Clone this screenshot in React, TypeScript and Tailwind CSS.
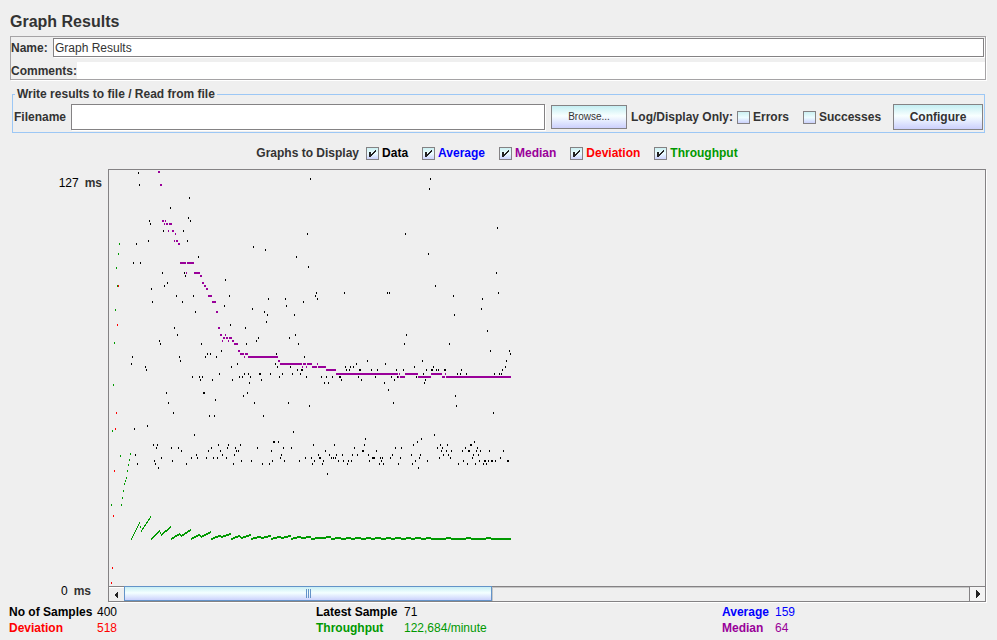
import React from "react";

type Row = [number, ...number[]];
type Tile = { x: number; y: number; rows: Row[] };
type Span = [y: number, from: number, to: number];

// Each row is a y value followed by the x of every sample on it.
const dataTiles: Tile[] = [
  {
    x: -4,
    y: -5,
    rows: [
      [7, 33], [19, 34], [32, 84], [42, 65], [52, 83], [55, 44, 85], [58, 45], [65, 58, 78], [75, 43, 82],
      [78, 31], [91, 93], [97, 28, 35], [107, 57, 79], [110, 80], [114, 120], [117, 62], [120, 59], [123, 46],
      [130, 71, 88, 124], [136, 47, 77], [140, 119], [146, 90],
    ],
  },
  {
    x: -4,
    y: 150,
    rows: [
      [4, 125], [7, 69], [14, 72], [20, 54], [23, 55, 96], [30, 116], [33, 102, 105], [36, 27, 74, 100, 111],
      [40, 75], [43, 26], [46, 40, 126], [49, 41], [53, 114], [56, 87, 94, 97], [59, 95, 107, 127],
      [72, 61, 98, 99], [79, 110], [82, 63], [92, 68], [95, 104, 109], [105, 42], [108, 29], [114, 89],
      [124, 48, 52, 113, 123], [127, 51, 66, 73, 106, 122], [130, 76, 103, 115], [134, 30, 91, 117, 129],
      [137, 56, 86, 92, 101, 108, 112, 121], [140, 49, 67], [143, 32, 50, 81, 128], [147, 53],
    ],
  },
  {
    x: 126,
    y: -5,
    rows: [
      [13, 75], [68, 72], [81, 18], [84, 30], [91, 61], [101, 73], [127, 81, 109], [130, 80], [133, 33, 50, 82],
      [136, 68], [140, 51], [143, 17], [146, 29], [149, 32, 59], [156, 31],
    ],
  },
  {
    x: 126,
    y: 150,
    rows: [
      [7, 10], [14, 60], [17, 23, 54], [20, 21], [23, 11, 63], [33, 41], [36, 69], [40, 132], [43, 2, 40, 121],
      [46, 42, 55, 110, 115, 118], [49, 62, 66, 67, 111, 114, 124, 125, 136, 142],
      [53, 9, 13, 24, 25, 35, 47, 57, 65], [56, 4, 7, 15, 44, 71, 86, 91, 97, 104, 105, 123, 140],
      [59, 26, 106, 126], [62, 14, 89, 93, 149], [72, 12], [75, 8], [82, 19, 53], [85, 74], [95, 28],
      [111, 58], [118, 130], [121, 38, 39, 43], [124, 5, 78, 99, 129], [127, 0, 22, 48, 56, 119],
      [130, 1, 3, 36, 90, 127, 128, 141], [134, 46, 83, 94, 101, 107, 117, 122, 133],
      [137, 45, 70, 76, 84, 85, 96, 98, 100, 137, 138, 139, 145, 147],
      [140, 6, 16, 37, 49, 64, 79, 88, 103, 108, 113, 116, 134, 146], [143, 27, 34, 77, 87, 112, 144, 148],
      [153, 92],
    ],
  },
  {
    x: 266,
    y: -5,
    rows: [
      [13, 55], [23, 54], [62, 122], [68, 30], [88, 53], [107, 121], [120, 60], [127, 12, 14, 123], [130, 78],
      [133, 107], [143, 106], [149, 79],
    ],
  },
  {
    x: 266,
    y: 150,
    rows: [
      [10, 112], [14, 31], [23, 29, 74], [30, 115, 134], [33, 135], [40, 47, 131], [43, 10], [46, 39, 58, 130],
      [49, 21, 28, 51, 56, 57, 61, 63, 69, 70, 86, 127], [53, 48, 82, 85, 91, 119, 124, 126], [56, 16, 22, 41],
      [59, 19, 50], [62, 49], [69, 13], [75, 80], [82, 18], [85, 81], [92, 118], [114, 59], [118, 46],
      [121, 42, 99], [124, 38, 65, 72, 95, 96], [127, 20, 26, 62, 67, 90, 102],
      [130, 66, 71, 76, 87, 93, 94, 101, 105, 114, 128], [134, 17, 36, 45, 68, 73, 98, 103],
      [137, 15, 25, 44, 64, 75, 97, 125], [140, 40, 52, 88, 104, 109, 110, 113, 116, 117, 120, 132, 133],
      [143, 23, 37, 83, 92, 100, 108, 111], [147, 43],
    ],
  },
];

const throughputTiles: Tile[] = [
  { x: -4, y: -5, rows: [[78, 14], [88, 13], [102, 11], [120, 12], [144, 10]] },
  { x: -4, y: 150, rows: [[22, 9], [64, 8], [110, 7], [133, 25], [135, 15], [139, 24], [144, 23]] },
  { x: -4, y: 270, rows: [[30, 22], [37, 21], [40, 20], [43, 19], [50, 18], [57, 17], [64, 16, 6]] },
];

const deviationTiles: Tile[] = [
  { x: -4, y: -5, rows: [[120, 13]] },
  { x: -4, y: 150, rows: [[4, 12], [92, 11], [108, 10]] },
  { x: -4, y: 270, rows: [[30, 9], [75, 8], [127, 7], [142, 6]] },
];

const medianSpans: { x: number; y: number; spans: Span[] }[] = [
  {
    x: -4,
    y: -5,
    spans: [
      [6, 53, 55], [19, 55, 57], [55, 57, 59], [55, 60, 61], [58, 59, 60], [58, 61, 63], [58, 64, 67],
      [65, 63, 64], [65, 67, 69], [68, 70, 71], [75, 69, 70], [75, 71, 73], [78, 73, 75], [97, 75, 81],
      [97, 82, 89], [107, 81, 82], [107, 89, 95], [110, 95, 97], [117, 97, 99], [120, 99, 101],
      [123, 101, 103], [130, 103, 107], [136, 107, 111], [146, 111, 113],
    ],
  },
  {
    x: -4,
    y: 150,
    spans: [
      [7, 113, 115], [14, 115, 117], [14, 120, 121], [17, 118, 120], [17, 121, 123], [17, 124, 127],
      [20, 117, 118], [20, 123, 124], [20, 127, 129], [23, 129, 133], [30, 133, 135],
    ],
  },
  {
    x: 126,
    y: 150,
    spans: [
      [33, 5, 9], [33, 10, 13], [36, 9, 10], [36, 13, 43], [40, 43, 45], [43, 45, 67], [43, 68, 71],
      [43, 72, 77], [43, 82, 83], [46, 67, 68], [46, 71, 72], [46, 77, 82], [46, 83, 91], [49, 91, 101],
      [53, 101, 163], [53, 164, 165], [53, 170, 183], [53, 196, 207], [53, 210, 211], [56, 163, 164],
      [56, 165, 170], [56, 183, 196], [56, 207, 210], [56, 211, 276],
    ],
  },
];

// Height of the first crest, the dip and the second crest of each 20-sample wave.
const waves = [
  [16, 8, 22], [8, 4, 12], [5, 3, 9], [4, 2, 7], [3, 2, 5], [3, 1, 4], [2, 1, 3], [2, 1, 3], [2, 1, 2],
  [1, 1, 2], [1, 0, 1], [1, 0, 1], [1, 0, 1], [1, 0, 1], [1, 0, 1], [0, 0, 1], [0, 0, 1], [0, 0, 1], [0, 0, 0],
];

const samplePath = (tiles: Tile[]) =>
  tiles
    .flatMap((t) => t.rows.flatMap(([y, ...xs]) => xs.map((x) => `M${x + t.x} ${y + t.y}h1v2h-1z`)))
    .join("");

const medianPath = medianSpans
  .flatMap((t) => t.spans.map(([y, a, b]) => `M${a + t.x} ${y + t.y}h${b - a}v2h${a - b}z`))
  .join("");

// One column per sample, stepped on whole pixels.
const wavePath = waves
  .map(([crest, dip, end], k) => {
    const at = (i: number) => {
      if (i <= 8) return (crest * i) / 8;
      if (i <= 10) return crest + ((dip - crest) * (i - 8)) / 2;
      return dip + ((end - dip) * (i - 10)) / 9;
    };
    return Array.from({ length: 20 }, (_, i) => `M${22 + 20 * k + i} ${368 - Math.round(at(i))}h1v2h-1z`).join("");
  })
  .join("");

function Graph() {
  return (
    <svg className="block h-[416px] w-full" shapeRendering="crispEdges" role="img" aria-label="Graph of samples">
      <path d={samplePath(dataTiles)} fill="#000" />
      <path d={medianPath} fill="#990099" />
      <path d={samplePath(throughputTiles) + wavePath} fill="#009900" />
      <path d={samplePath(deviationTiles)} fill="#f00" />
    </svg>
  );
}

function Check({ label, color = "text-[#333]", checked = false }: { label: string; color?: string; checked?: boolean }) {
  return (
    <label className={`flex items-center gap-[3px] ${color}`}>
      <span className="relative block size-[13px]">
        <input
          type="checkbox"
          defaultChecked={checked}
          className="peer block size-[13px] appearance-none border border-[#848284] bg-linear-to-b from-[#ccf0f2] via-[#ecfcff] to-[#cdd2fc]"
        />
        <svg
          viewBox="0 0 13 13"
          className="pointer-events-none absolute inset-0 hidden size-[13px] peer-checked:block"
          shapeRendering="crispEdges"
          aria-hidden="true"
        >
          <path d="M3 5h2v2h1v-1h1v-1h1v-1h1v-1h1v2h-1v1h-1v1h-1v1h-1v1h-1v1h-2z" fill="#222" />
        </svg>
      </span>
      {label}
    </label>
  );
}

function Stat({ label, value, color, width }: { label: string; value: string; color: string; width: string }) {
  return (
    <div className={`flex ${color}`}>
      <dt className={`font-bold ${width}`}>{label}</dt>
      <dd>{value}</dd>
    </div>
  );
}

const bevel = "border border-[#848284] bg-linear-to-b from-[#c4eef2] via-[#f8ffff] via-45% to-[#ccd0fc]";

export default function App() {
  return (
    <main className="min-h-screen bg-[#efefef] pt-3 pr-[11px] font-['Liberation_Sans',Arial,sans-serif] text-[12px] leading-4 text-[#333]">
      <h1 className="pl-[10px] text-[16px] leading-5 font-bold">Graph Results</h1>

      <section className="mt-1 ml-[10px] border border-[#a5a3a5] shadow-[1px_1px_#fff]">
        <div className="flex items-center pt-px pr-px">
          <label htmlFor="name" className="w-[42px] font-bold">Name:</label>
          <input
            id="name"
            defaultValue="Graph Results"
            className="h-[19px] min-w-0 flex-1 border border-[#848284] bg-white px-px shadow-[1px_1px_#fff] outline-none"
          />
        </div>
        <div className="mt-[5px] flex h-[17px] items-center">
          <label htmlFor="comments" className="w-[66px] font-bold">Comments:</label>
          <input id="comments" className="h-[17px] min-w-0 flex-1 bg-white px-px outline-none" />
        </div>
      </section>

      <fieldset className="mt-[6px] mr-px ml-3 border border-[#9cc7f5] px-px pt-[2px] pb-[2px] font-bold">
        <legend className="ml-px px-[2px]">Write results to file / Read from file</legend>
        <div className="flex items-center">
          <label htmlFor="filename" className="w-[57px]">Filename</label>
          <input
            id="filename"
            className="h-[26px] min-w-0 flex-1 border border-[#848284] bg-white px-1 font-normal shadow-[1px_1px_#fff] outline-none"
          />
          <button type="button" className={`ml-[6px] h-6 w-[76px] text-[10px] font-normal ${bevel}`}>
            Browse...
          </button>
          <span className="ml-1 w-[106px] whitespace-nowrap">Log/Display Only:</span>
          <div className="w-[66px]"><Check label="Errors" /></div>
          <div className="w-[90px]"><Check label="Successes" /></div>
          <button type="button" className={`h-[26px] w-[90px] ${bevel}`}>
            Configure
          </button>
        </div>
      </fieldset>

      <div className="mt-3 flex justify-center gap-[14px] pl-[8px] font-bold">
        <div className="flex gap-[7px]">
          <span>Graphs to Display</span>
          <Check label="Data" color="text-black" checked />
        </div>
        <Check label="Average" color="text-[#0000ff]" checked />
        <Check label="Median" color="text-[#990099]" checked />
        <Check label="Deviation" color="text-[#ff0000]" checked />
        <Check label="Throughput" color="text-[#009900]" checked />
      </div>

      <div className="mt-2 flex">
        <div className="flex w-[108px] flex-col justify-between pt-[6px] pb-[3px]">
          <div className="flex justify-end gap-[6px] pr-[6px]">
            <span className="text-black">127</span>
            <span className="font-bold">ms</span>
          </div>
          <div className="flex justify-end gap-[6px] pr-[17px]">
            <span className="text-black">0</span>
            <span className="font-bold">ms</span>
          </div>
        </div>
        <div className="min-w-0 flex-1 border border-[#848284] shadow-[1px_1px_#fff]">
          <Graph />
          <div className="flex h-[15px] border-t border-[#848284]">
            <button type="button" aria-label="Scroll left" className="flex w-[15px] items-center justify-center border-t border-white pr-px">
              <svg viewBox="0 0 4 8" className="h-2 w-1" shapeRendering="crispEdges"><path d="M4 0v8L0 4z" fill="#222" /></svg>
            </button>
            <div className="grid flex-1 grid-cols-[368fr_477fr]">
              <div className="-mt-px flex items-center justify-center gap-px border border-[#6393c8] bg-linear-to-b from-[#c8eef4] via-[#f4ffff] via-45% to-[#ccd2fc]">
                <i className="h-[9px] w-px bg-[#6393c8]" />
                <i className="h-[9px] w-px bg-[#6393c8]" />
                <i className="h-[9px] w-px bg-[#6393c8]" />
              </div>
              <div className="border-t border-l border-[#c6c6c6]" />
            </div>
            <button type="button" aria-label="Scroll right" className="flex w-4 items-center justify-center border-l border-[#848284] bg-[#f4f4f4]">
              <svg viewBox="0 0 4 8" className="h-2 w-1" shapeRendering="crispEdges"><path d="M0 0v8l4-4z" fill="#222" /></svg>
            </button>
          </div>
        </div>
      </div>

      <dl className="mt-[2px] grid grid-cols-[307fr_406fr_264fr] pl-[9px]">
        <Stat label="No of Samples" value="400" color="text-black" width="w-[88px]" />
        <Stat label="Latest Sample" value="71" color="text-black" width="w-[88px]" />
        <Stat label="Average" value="159" color="text-[#0000ff]" width="w-[53px]" />
        <Stat label="Deviation" value="518" color="text-[#ff0000]" width="w-[88px]" />
        <Stat label="Throughput" value="122,684/minute" color="text-[#009900]" width="w-[88px]" />
        <Stat label="Median" value="64" color="text-[#990099]" width="w-[53px]" />
      </dl>
    </main>
  );
}
